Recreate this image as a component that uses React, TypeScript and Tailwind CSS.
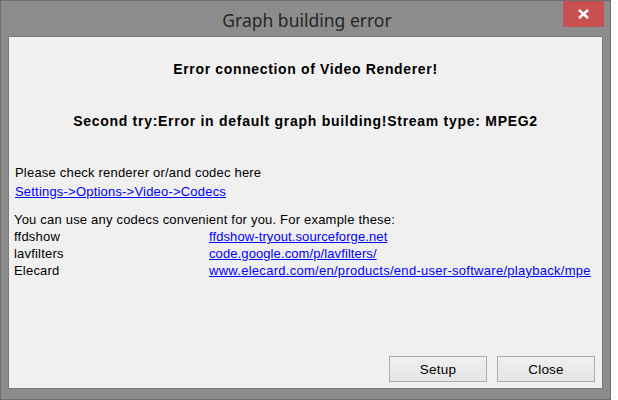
import React from "react";

const sans = { fontFamily: '"Liberation Sans", Arial, sans-serif' };

export default function App() {
  return (
    <div className="w-[618px] h-[400px] bg-white overflow-hidden">
      <div className="w-[611px] h-[400px] bg-[#8c8c8c] border border-[#6e6e6e] flex flex-col px-[7px] pb-[10px]">
        <div className="relative h-[35px] shrink-0">
          <div
            className="absolute left-0 right-0 top-[8px] pl-[3px] text-center text-[17.5px] leading-[22px] text-[#262626]"
            style={{ fontFamily: '"Noto Sans", "Open Sans", sans-serif' }}
          >
            Graph building error
          </div>
          <div className="absolute top-0 right-[-1px] w-[41px] h-[26px] bg-[#c75050] flex items-center justify-center">
            <svg width="11" height="10" viewBox="0 0 11 10">
              <path d="M1 1 L10 9 M10 1 L1 9" stroke="#ffffff" strokeWidth="2.4" strokeLinecap="butt" />
            </svg>
          </div>
        </div>
        <div
          className="flex-1 bg-[#f0f0f0] border border-[#7a7a7a] flex flex-col text-[13px] leading-[17px] text-black tracking-[0.2px]"
          style={sans}
        >
          <div className="mt-[24px] text-center font-bold text-[14px] tracking-[0.65px]">
            Error connection of Video Renderer!
          </div>
          <div className="mt-[35px] text-center font-bold text-[14px] tracking-[0.72px]">
            Second try:Error in default graph building!Stream type: MPEG2
          </div>
          <div className="mt-[34px] pl-[6px]">Please check renderer or/and codec here</div>
          <div className="mt-[2px] pl-[6px]">
            <span className="text-[#0000ff] underline">Settings-&gt;Options-&gt;Video-&gt;Codecs</span>
          </div>
          <div className="mt-[11px] pl-[5px]">You can use any codecs convenient for you. For example these:</div>
          <div className="grid grid-cols-[195px_383px] pl-[5px]">
            <div>ffdshow</div>
            <div className="text-[#0000ff] underline whitespace-nowrap overflow-hidden tracking-[0.1px]">ffdshow-tryout.sourceforge.net</div>
            <div>lavfilters</div>
            <div className="text-[#0000ff] underline whitespace-nowrap overflow-hidden tracking-[0.1px]">code.google.com/p/lavfilters/</div>
            <div>Elecard</div>
            <div className="text-[#0000ff] underline whitespace-nowrap overflow-hidden tracking-[0.28px]">
              www.elecard.com/en/products/end-user-software/playback/mpe
            </div>
          </div>
          <div className="flex-1" />
          <div className="flex justify-end gap-[10px] pr-[7px] pb-[6px]">
            <button className="w-[98px] h-[26px] border border-[#acacac] bg-gradient-to-b from-[#f0f0f0] to-[#e5e5e5] text-[13.5px] text-black" style={sans}>
              Setup
            </button>
            <button className="w-[98px] h-[26px] border border-[#acacac] bg-gradient-to-b from-[#f0f0f0] to-[#e5e5e5] text-[13.5px] text-black" style={sans}>
              Close
            </button>
          </div>
        </div>
      </div>
    </div>
  );
}
